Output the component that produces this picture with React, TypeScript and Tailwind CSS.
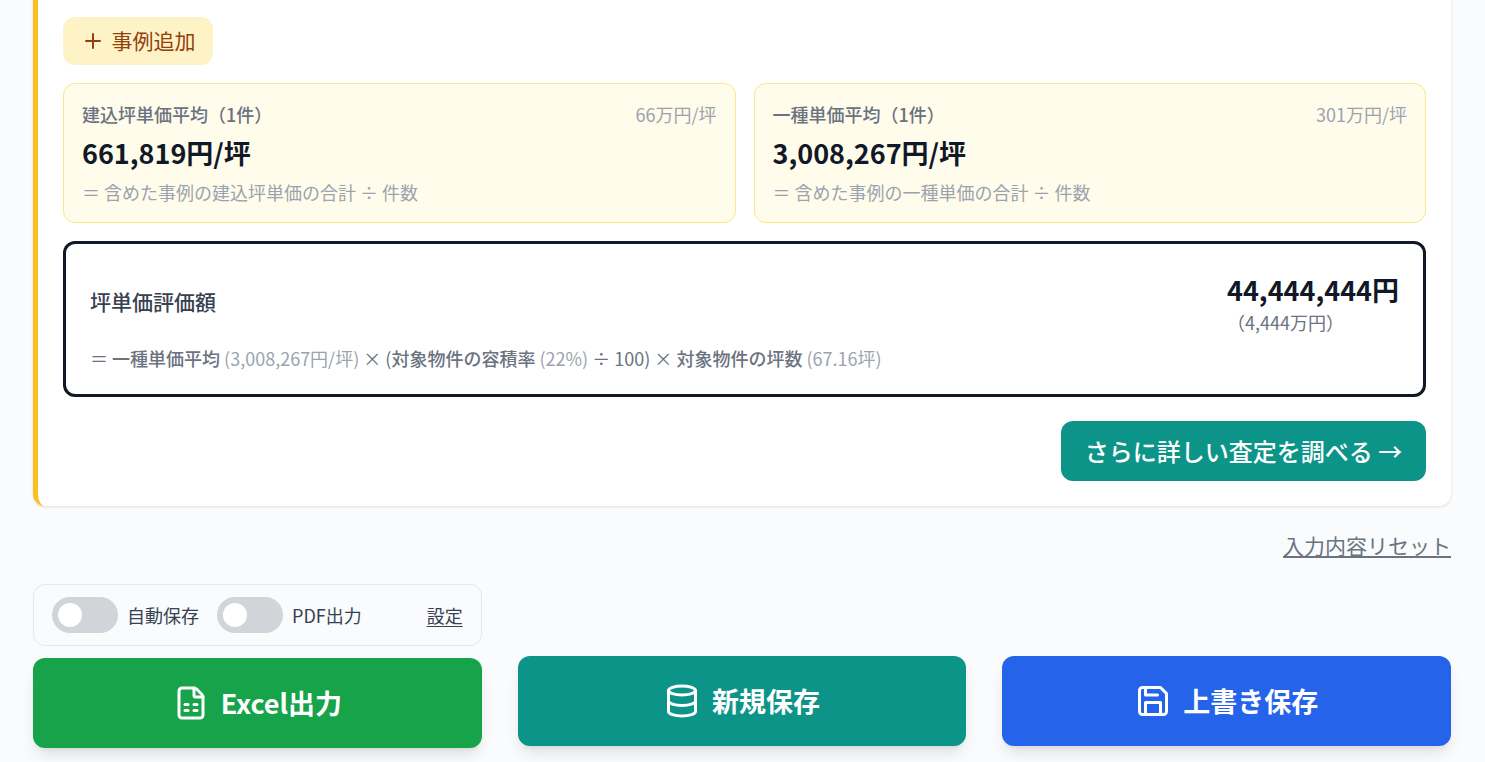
import React from 'react';
import { Plus, FileSpreadsheet, Database } from 'lucide-react';

const font = { fontFamily: '"Noto Sans CJK JP", "Noto Sans", sans-serif' };

const AvgCard = ({ title, short, value, note }: { title: string; short: string; value: string; note: string }) => (
  <div className="flex-1 h-[140px] rounded-[12px] border border-[#fde68a] bg-[#fffceb] px-[18px] pt-[17px]">
    <div className="flex justify-between items-center h-[26px] text-[18px] leading-[26px]">
      <span className="text-[#6b7280] font-medium">{title}</span>
      <span className="text-[#9ca3af]">{short}</span>
    </div>
    <div className="mt-[6px] h-[40px] text-[27px] leading-[40px] font-bold text-[#111827]">{value}</div>
    <div className="mt-[6px] h-[26px] text-[18px] leading-[26px] text-[#9ca3af]">{note}</div>
  </div>
);

const Toggle = ({ label }: { label: string }) => (
  <div className="flex items-center gap-[9px]">
    <div className="w-[66px] h-[36px] rounded-full bg-[#d1d5d9] flex items-center pl-[6px]">
      <div className="w-[24px] h-[24px] rounded-full bg-white" />
    </div>
    <span className="text-[18px] text-[#374151]">{label}</span>
  </div>
);

const g = 'text-[#9ca3af]';
const m = 'font-medium';

export default function App() {
  return (
    <div style={font} className="w-[1485px] h-[762px] overflow-hidden bg-[#f9fbfd] pl-[33px] pr-[34px]">
      <div className="h-[506px] rounded-b-[12px] border-l-[5px] border-l-[#fbbf24] bg-white shadow-[0_1px_3px_rgba(0,0,0,0.12)] pl-[25px] pr-[25px] pt-[17px]">
        <button className="flex items-center gap-[6.5px] h-[48px] w-[150px] pl-[18px] rounded-[12px] bg-[#fef3c7] text-[#92400e] text-[21px]">
          <Plus size={24} strokeWidth={2} />
          事例追加
        </button>
        <div className="flex gap-[18px] mt-[18px]">
          <AvgCard title="建込坪単価平均（1件）" short="66万円/坪" value="661,819円/坪" note="＝ 含めた事例の建込坪単価の合計 ÷ 件数" />
          <AvgCard title="一種単価平均（1件）" short="301万円/坪" value="3,008,267円/坪" note="＝ 含めた事例の一種単価の合計 ÷ 件数" />
        </div>
        <div className="mt-[18px] h-[156px] rounded-[12px] border-[3px] border-[#111827] pl-[24px] pr-[24px] pt-[25px]">
          <div className="flex justify-between">
            <span className="mt-[16px] text-[21px] leading-[32px] font-medium text-[#374151]">坪単価評価額</span>
            <div>
              <div className="text-[27px] leading-[42px] font-bold text-[#111827]">44,444,444円</div>
              <div className="text-[18px] leading-[22px] text-[#6b7280]">（4,444万円）</div>
            </div>
          </div>
          <div className="mt-[12px] text-[18px] leading-[26px] text-[#6b7280]">
            ＝ <span className={m}>一種単価平均</span> <span className={g}>(3,008,267円/坪)</span> × (<span className={m}>対象物件の容積率</span> <span className={g}>(22%)</span> ÷ 100) × <span className={m}>対象物件の坪数</span> <span className={g}>(67.16坪)</span>
          </div>
        </div>
        <div className="flex justify-end mt-[24px]">
          <button className="w-[365px] h-[60px] rounded-[12px] bg-[#0d9488] text-white text-[24px] font-medium">さらに詳しい査定を調べる →</button>
        </div>
      </div>
      <div className="flex justify-end mt-[23px]">
        <a className="text-[21px] leading-[32px] text-[#6b7280] underline">入力内容リセット</a>
      </div>
      <div className="grid grid-cols-3 gap-[36px] mt-[23px]">
        <div>
          <div className="h-[62px] rounded-[12px] border border-[#e5e7eb] flex items-center pl-[18px] pr-[18px]">
            <Toggle label="自動保存" />
            <div className="ml-[18px]"><Toggle label="PDF出力" /></div>
            <a className="ml-auto text-[18px] text-[#374151] underline underline-offset-[3px]">設定</a>
          </div>
          <button className="mt-[12px] w-full h-[90px] rounded-[12px] bg-[#16a34a] text-white text-[27px] font-bold flex items-center justify-center gap-[12px] shadow-lg">
            <FileSpreadsheet size={36} strokeWidth={2} />
            Excel出力
          </button>
        </div>
        <div className="flex items-end pb-[2px]">
          <button className="w-full h-[90px] rounded-[12px] bg-[#0d9488] text-white text-[27px] font-bold flex items-center justify-center gap-[12px] shadow-lg">
            <Database size={36} strokeWidth={2} />
            新規保存
          </button>
        </div>
        <div className="flex items-end pb-[2px]">
          <button className="w-full h-[90px] rounded-[12px] bg-[#2563eb] text-white text-[27px] font-bold flex items-center justify-center gap-[12px] shadow-lg">
            <svg width="36" height="36" viewBox="0 0 24 24" fill="none" stroke="currentColor" strokeWidth="2" strokeLinecap="round" strokeLinejoin="round">
              <path d="M5 3h12l4 4v12a2 2 0 0 1-2 2H5a2 2 0 0 1-2-2V5a2 2 0 0 1 2-2z" />
              <path d="M17 21v-8H7v8" />
              <path d="M7 3v5h8" />
            </svg>
            上書き保存
          </button>
        </div>
      </div>
    </div>
  );
}
